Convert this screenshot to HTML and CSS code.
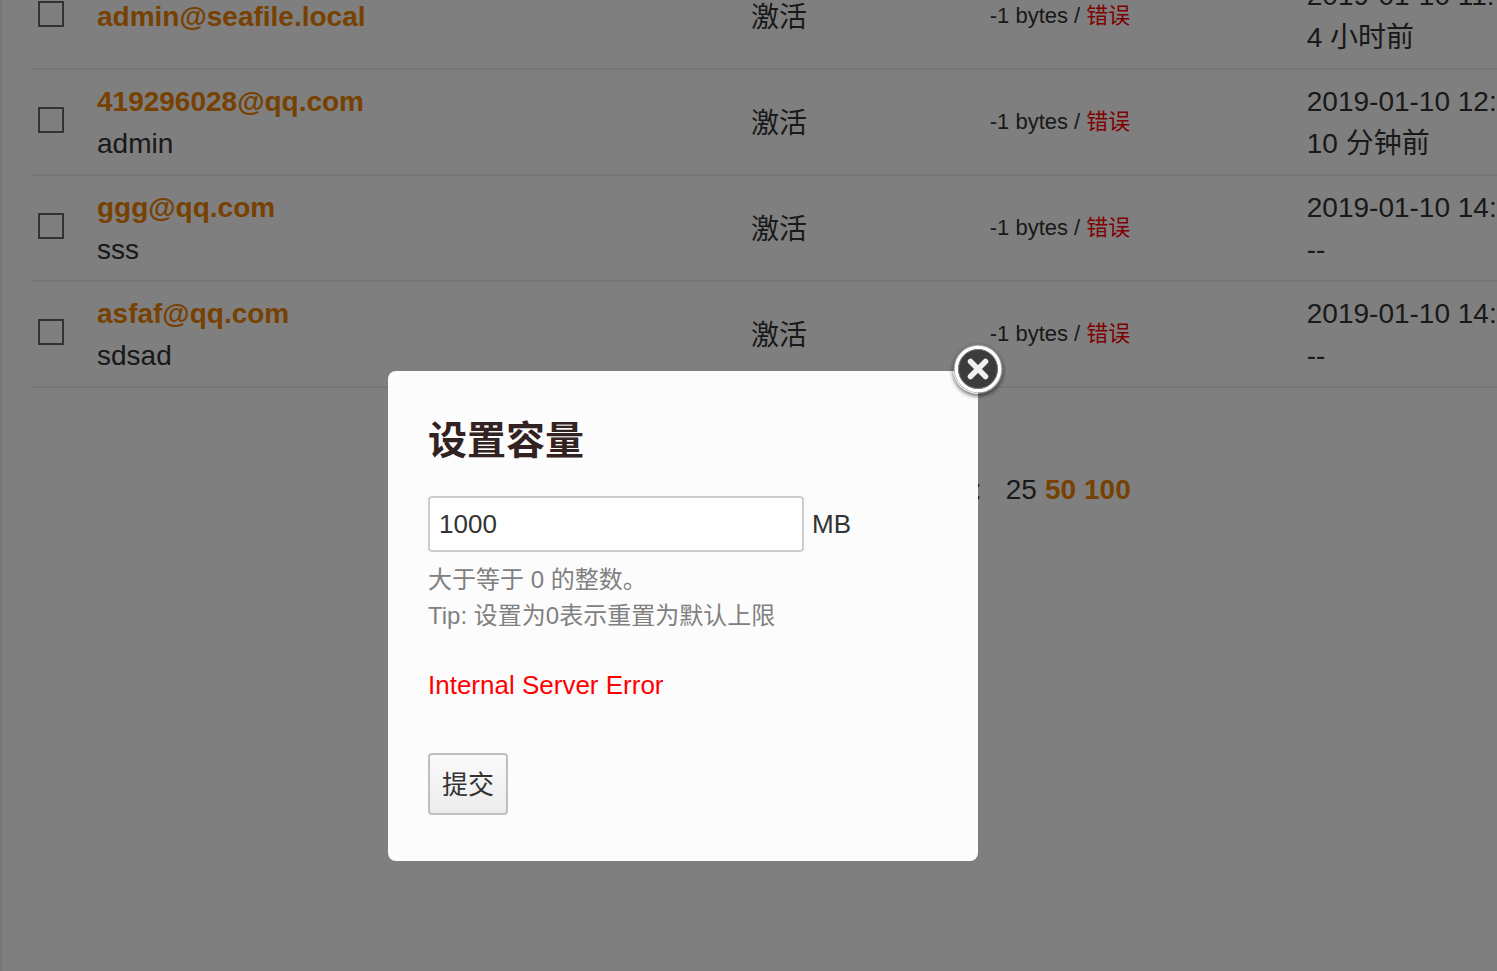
FILE: index.html
```html
<!DOCTYPE html>
<html lang="zh-CN">
<head>
<meta charset="utf-8">
<title>设置容量</title>
<link rel="stylesheet" href="styles.css">
</head>
<body>
<main class="panel">
  <table class="users">
    <colgroup><col class="col-check"><col class="col-email"><col class="col-status"><col class="col-quota"><col></colgroup>
    <tbody>
      <tr>
        <td><input class="check" type="checkbox" aria-label="admin@seafile.local"></td>
        <td><a class="link" href="#">admin@seafile.local</a></td>
        <td class="status">激活</td>
        <td class="quota">-1 bytes / <span class="error">错误</span></td>
        <td>2019-01-10 11:<br>4 小时前</td>
      </tr>
      <tr>
        <td><input class="check" type="checkbox" aria-label="419296028@qq.com"></td>
        <td><a class="link" href="#">419296028@qq.com</a><br>admin</td>
        <td class="status">激活</td>
        <td class="quota">-1 bytes / <span class="error">错误</span></td>
        <td>2019-01-10 12:<br>10 分钟前</td>
      </tr>
      <tr>
        <td><input class="check" type="checkbox" aria-label="ggg@qq.com"></td>
        <td><a class="link" href="#">ggg@qq.com</a><br>sss</td>
        <td class="status">激活</td>
        <td class="quota">-1 bytes / <span class="error">错误</span></td>
        <td>2019-01-10 14:<br>--</td>
      </tr>
      <tr>
        <td><input class="check" type="checkbox" aria-label="asfaf@qq.com"></td>
        <td><a class="link" href="#">asfaf@qq.com</a><br>sdsad</td>
        <td class="status">激活</td>
        <td class="quota">-1 bytes / <span class="error">错误</span></td>
        <td>2019-01-10 14:<br>--</td>
      </tr>
    </tbody>
  </table>
  <nav class="pager"><span class="pager-label">每页:</span><span>25</span><a class="link" href="#">50</a><a class="link" href="#">100</a></nav>
</main>
<div class="overlay"></div>
<div class="modal" role="dialog" aria-labelledby="modal-title">
  <button class="close" type="button" aria-label="关闭">
    <svg viewBox="0 0 50 50" width="50" height="50" aria-hidden="true">
      <circle cx="25" cy="25" r="24" fill="#a8a8a8"/>
      <circle cx="25" cy="25" r="21.500" fill="#3c3c3c" stroke="#fff" stroke-width="3.500"/>
      <circle cx="25" cy="25" r="19.500" fill="none" stroke="#777" stroke-width="1"/>
      <path d="M17.500 17.500L32.500 32.500M32.500 17.500L17.500 32.500" stroke="#f0f0f0" stroke-width="5.500" stroke-linecap="round"/>
    </svg>
  </button>
  <form class="form">
    <h3 class="title" id="modal-title">设置容量</h3>
    <div class="field">
      <input class="amount" id="amount" type="text" value="1000" aria-describedby="tip">
      <label for="amount">MB</label>
    </div>
    <p class="tip" id="tip">大于等于 0 的整数。<br>Tip: 设置为0表示重置为默认上限</p>
    <p class="message">Internal Server Error</p>
    <button class="submit" type="button">提交</button>
  </form>
</div>
</body>
</html>
```
FILE: styles.css
```css
* {
  box-sizing: border-box;
}

body {
  margin: 0;
  overflow: hidden;
  color: #333;
  background: #fff;
  font: 28px/42px "Liberation Sans", "Noto Sans CJK SC", sans-serif;
}

.panel {
  min-height: 100vh;
  padding-left: 30px;
  border-left: 2px solid #eee;
  overflow: hidden;
}

.users {
  width: 100%;
  margin-top: -36px;
  table-layout: fixed;
  border-collapse: separate;
  border-spacing: 0;
}

.col-check {
  width: 59px;
}

.col-email {
  width: 44.64%;
}

.col-status {
  width: 16.3%;
}

.col-quota {
  width: 21.64%;
}

.users td {
  height: 106px;
  padding: 11px 0 9px 6px;
  border-bottom: 2px solid #eee;
  white-space: nowrap;
  vertical-align: middle;
}

.users .status {
  padding-top: 12px;
  padding-bottom: 8px;
}

.users .quota {
  padding-top: 10px;
  padding-bottom: 10px;
  font-size: 22px;
}

.check {
  display: block;
  width: 26px;
  height: 26px;
  margin: 0 0 6px;
  appearance: none;
  border: 2px solid #666;
  background: #fff;
}

.link {
  color: #ee8204;
  font-weight: bold;
  text-decoration: none;
}

.error {
  color: #f00;
}

.pager {
  display: flex;
  gap: 8px;
  justify-content: flex-end;
  margin-top: 81px;
  padding-right: 25%;
}

.pager-label {
  margin-right: 16px;
}

.overlay {
  position: fixed;
  inset: 0;
  background: rgba(0, 0, 0, 0.5);
}

.modal {
  position: fixed;
  top: 371px;
  left: 388px;
  width: 590px;
  padding: 40px 40px 46px;
  border-radius: 8px;
  background: #fcfcfc;
  font-size: 26px;
  line-height: 40px;
}

.close {
  position: absolute;
  top: -27px;
  right: -25px;
  width: 50px;
  height: 50px;
  padding: 0;
  border: 0;
  border-radius: 50%;
  background: none;
  box-shadow: 0 2px 4px rgba(0, 0, 0, 0.6);
}

.close svg {
  display: block;
}

.title {
  margin: 0 0 25px;
  color: #322;
  font-size: 39px;
  line-height: 60px;
}

.field {
  display: flex;
  align-items: center;
  gap: 8px;
}

.amount {
  width: 376px;
  height: 56px;
  padding: 0 9px;
  border: 2px solid #ccc;
  border-radius: 4px;
  color: #333;
  background: #fff;
  font: inherit;
}

.tip {
  margin: 10px 0 31px;
  color: #808080;
  font-size: 24px;
  line-height: 36px;
}

.message {
  margin: 0 0 48px;
  color: #f00;
}

.submit {
  display: block;
  height: 62px;
  padding: 2px 12px 0;
  border: 2px solid #bfbfbf;
  border-radius: 4px;
  color: #333;
  background: linear-gradient(#fafafa, #ececec);
  font: inherit;
}
```
